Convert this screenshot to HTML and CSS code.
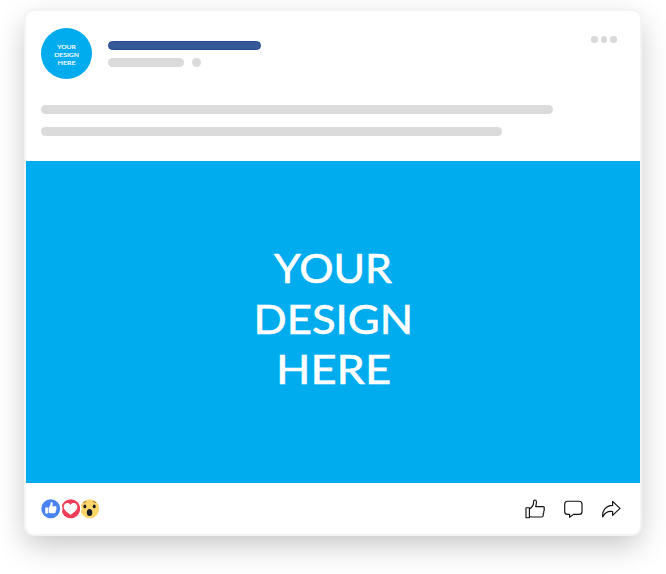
FILE: index.html
```html
<!DOCTYPE html>
<html lang="en">
<head>
<meta charset="utf-8">
<title>Social post</title>
<link rel="stylesheet" href="styles.css">
</head>
<body>
<article class="post">
  <header class="post-header">
    <div class="avatar">
      <svg class="wordmark" viewBox="0 0 160 140">
        <text x="21" y="38" textLength="118" lengthAdjust="spacingAndGlyphs">YOUR</text>
        <text x="1" y="89" textLength="159" lengthAdjust="spacingAndGlyphs">DESIGN</text>
        <text x="23" y="139" textLength="115" lengthAdjust="spacingAndGlyphs">HERE</text>
      </svg>
    </div>
    <div class="author">
      <div class="bar author-name"></div>
      <div class="author-meta">
        <div class="bar author-date"></div>
        <div class="bar author-scope"></div>
      </div>
    </div>
    <div class="more"><i></i><i></i><i></i></div>
  </header>
  <div class="copy">
    <div class="bar copy-long"></div>
    <div class="bar copy-short"></div>
  </div>
  <div class="media">
    <svg class="wordmark" viewBox="0 0 160 140">
      <text x="21" y="33" textLength="118" lengthAdjust="spacingAndGlyphs">YOUR</text>
      <text x="0.5" y="84" textLength="159.5" lengthAdjust="spacingAndGlyphs">DESIGN</text>
      <text x="23" y="134" textLength="115" lengthAdjust="spacingAndGlyphs">HERE</text>
    </svg>
  </div>
  <footer class="post-footer">
    <div class="reactions">
      <svg viewBox="0 0 20 20">
        <circle cx="10" cy="10" r="9.7" fill="#4a83f0"/>
        <path fill="#fff" d="M4.4 8.6h2.7v6.2H4.4zM7.8 8.6c1.3-.8 1.8-2 2-3.6.1-1.3.3-1.8.9-1.8 1.5 0 1.6 2 .9 4.3h3.2c1.1 0 1.3 1.1.8 1.6.6.6.4 1.3-.1 1.6.4.7.1 1.3-.5 1.5.3.8-.1 2.3-.9 2.3H9.8c-.8 0-1.2-.3-2-.4z"/>
      </svg>
      <svg viewBox="0 0 20 20">
        <circle cx="10" cy="10" r="9.7" fill="#ee3d58"/>
        <path fill="#fff" d="M0 4.5Q3.2 10 0 15.5Z"/>
        <path fill="#fff" d="M9.8 16.3C6.8 13.9 2.8 11.6 2.8 8 2.8 4 8 2.8 9.8 6.2c1.8-3.4 7-2.2 7 1.8 0 3.6-4 5.9-7 8.3z"/>
      </svg>
      <svg viewBox="0 0 20 20">
        <circle cx="10" cy="10" r="9.7" fill="#fed568"/>
        <path fill="#fff" d="M0 4.5Q3.2 10 0 15.5Z"/>
        <g fill="#191d2b"><ellipse cx="5" cy="7.6" rx="1.5" ry="2"/><ellipse cx="14.6" cy="7.6" rx="1.5" ry="2"/><ellipse cx="9.8" cy="13.8" rx="2.8" ry="3.6"/></g>
        <path d="M3.3 4.1Q4.8 2.3 6.4 2.8M13.2 2.8Q15 2.3 16.4 4.1" fill="none" stroke="#6d5630" stroke-width=".8"/>
      </svg>
    </div>
    <div class="actions">
      <svg viewBox="0 0 20 20"><path d="M1 8.7H4.4V18.7H1ZM4.4 10C6.7 8.7 8.3 7 8.5 4.1 8.5 2.2 8.9 1 10 1 11.7 1 11.8 3.4 10.7 7.6H18C19.4 7.6 19.6 8.9 19 9.7 19.5 10.6 19.3 11.6 18.7 12.1 19 13.3 18.8 14.1 18.2 14.8 18.4 16.9 18 18 16.3 18H7.3C6 18 5.4 17.5 4.4 17.5"/></svg>
      <svg viewBox="0 0 20 20"><path d="M4.5 2.2H16Q19 2.2 19 5.2V12.4Q19 15.4 16 15.4H10.5L6.6 18.2V15.4H4.5Q1.7 15.4 1.7 12.4V5.2Q1.7 2.2 4.5 2.2Z"/></svg>
      <svg viewBox="0 0 20 20"><path d="M11.6 2.4 19 9.4 11.6 16.4V12.5C7 11.8 4 13.4 1.7 17.9 1 11.6 4.8 6.7 11.6 6.4Z"/></svg>
    </div>
  </footer>
</article>
</body>
</html>
```
FILE: styles.css
```css
* { box-sizing: border-box; }
body {
  margin: 0;
  height: 574px;
  overflow: hidden;
  padding: 11px 26px;
  background: #fff;
  font-family: Lato, "Open Sans", sans-serif;
}
.post {
  width: 614px;
  height: 523px;
  border-radius: 8px;
  background: #fff;
  box-shadow: 0 0 0 2px #f4f4f4, 0 11px 30px rgba(0, 0, 0, .23);
}
.bar { height: 9px; border-radius: 5px; background: #dbdbdb; }
.post-header {
  display: flex;
  height: 94px;
  padding: 17px 23px 0 15px;
}
.avatar {
  display: flex;
  align-items: center;
  justify-content: center;
  width: 51px;
  height: 51px;
  border-radius: 50%;
  background: #00acee;
}
.avatar .wordmark { width: 25px; height: 22px; }
.author { padding: 13px 0 0 16px; }
.author-name { width: 153px; background: #365899; border: 1px solid #244b93; }
.author-meta { display: flex; gap: 8px; margin-top: 8px; }
.author-date { width: 76px; }
.author-scope { width: 9px; }
.more { display: flex; gap: 3px; margin-left: auto; padding-top: 8px; }
.more i { width: 6.6px; height: 6.6px; border-radius: 50%; background: #d9d9d9; }
.copy {
  display: flex;
  flex-direction: column;
  gap: 13px;
  height: 56px;
  padding-left: 15px;
}
.copy-long { width: 512px; }
.copy-short { width: 461px; }
.media {
  display: flex;
  justify-content: center;
  height: 322px;
  padding-top: 89px;
  background: #00acee;
}
.media .wordmark { width: 160px; height: 140px; }
.wordmark { overflow: visible; }
.wordmark text {
  fill: #fff;
  stroke: #fff;
  stroke-width: .6px;
  font-size: 41px;
}
.avatar .wordmark text { stroke-width: 1px; }
.post-footer {
  display: flex;
  justify-content: space-between;
  align-items: center;
  height: 51px;
  padding: 1px 19px 0 15px;
}
.reactions { display: flex; }
.reactions svg { width: 19.5px; height: 19.5px; }
.actions { display: flex; gap: 18px; }
.actions svg {
  width: 20px;
  height: 20px;
  fill: none;
  stroke: #111;
  stroke-width: 1.15;
  stroke-linejoin: round;
}
```
